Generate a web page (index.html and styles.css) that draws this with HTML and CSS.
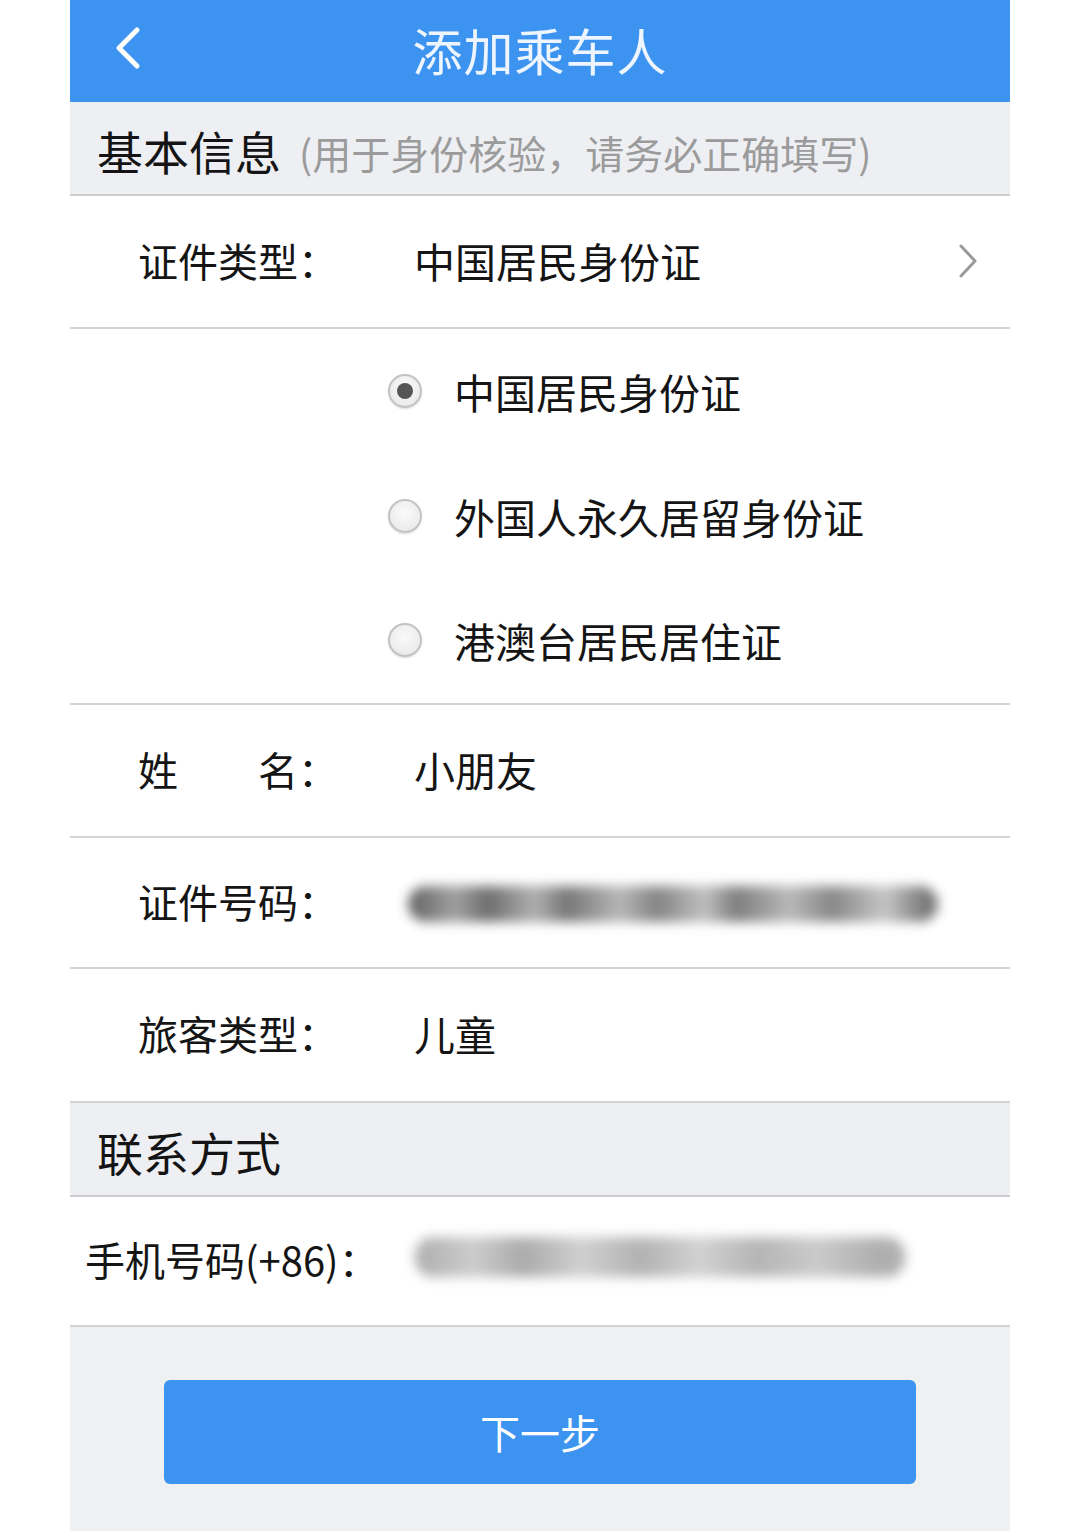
FILE: index.html
```html
<!DOCTYPE html>
<html lang="zh-CN">
<head>
<meta charset="utf-8">
<title>添加乘车人</title>
<link rel="stylesheet" href="styles.css">
</head>
<body>
<div class="page">
  <header class="topbar">
    <svg class="back" width="30" height="44" viewBox="0 0 30 44"><path d="M24 4 L6 22 L24 40" fill="none" stroke="#fff" stroke-width="5" stroke-linecap="round" stroke-linejoin="round"/></svg>
    <h1 class="title">添加乘车人</h1>
  </header>

  <div class="section">
    <span class="section-title">基本信息</span>
    <span class="section-note">(用于身份核验，请务必正确填写)</span>
  </div>

  <div class="row">
    <div class="label">证件类型：</div>
    <div class="value">中国居民身份证</div>
    <svg class="chev" width="24" height="36" viewBox="0 0 24 36"><path d="M5 3 L19 18 L5 33" fill="none" stroke="#9a9a9a" stroke-width="3" stroke-linecap="round" stroke-linejoin="round"/></svg>
  </div>

  <div class="options">
    <div class="option"><span class="radio checked"></span><span>中国居民身份证</span></div>
    <div class="option"><span class="radio"></span><span>外国人永久居留身份证</span></div>
    <div class="option"><span class="radio"></span><span>港澳台居民居住证</span></div>
  </div>

  <div class="row row-name">
    <div class="label split"><span>姓</span><span>名：</span></div>
    <div class="value">小朋友</div>
  </div>

  <div class="row row-id">
    <div class="label">证件号码：</div>
    <div class="smudge smudge-id"></div>
  </div>

  <div class="row row-type">
    <div class="label">旅客类型：</div>
    <div class="value">儿童</div>
  </div>

  <div class="section">
    <span class="section-title">联系方式</span>
  </div>

  <div class="row row-phone">
    <div class="label phone-label">手机号码(+86)：</div>
    <div class="smudge smudge-phone"></div>
  </div>

  <div class="footer">
    <button class="next">下一步</button>
  </div>
</div>
</body>
</html>
```

FILE: styles.css
```css
html, body {
  margin: 0;
  padding: 0;
  background: #ffffff;
}
body {
  font-family: "Noto Sans CJK SC", "Noto Sans", sans-serif;
  color: #151515;
}
.page {
  width: 940px;
  margin: 0 auto;
  min-height: 1531px;
  display: flex;
  flex-direction: column;
  background: #fff;
}
.topbar {
  height: 102px;
  background: #3d94f0;
  display: flex;
  align-items: center;
  position: relative;
}
.back {
  margin-left: 43px;
  margin-top: -6px;
}
.title {
  position: absolute;
  left: 0;
  right: 0;
  top: 0;
  margin: 0;
  text-align: center;
  line-height: 98px;
  font-size: 50px;
  font-weight: 400;
  color: #eef5ff;
  letter-spacing: 1px;
}
.section {
  background: #eeeff3;
  border-bottom: 2px solid #cdcdd0;
  display: flex;
  align-items: center;
  padding-left: 27px;
  padding-top: 4px;
  box-sizing: border-box;
  height: 94px;
}
.section-title {
  font-size: 46px;
  color: #141414;
}
.section-note {
  font-size: 39px;
  color: #9b9b9b;
  margin-left: 18px;
  margin-top: 4px;
}
.row {
  height: 133px;
  box-sizing: border-box;
  border-bottom: 2px solid #d4d4d4;
  display: flex;
  align-items: center;
  padding-left: 68px;
  padding-bottom: 4px;
  font-size: 40px;
}
.label {
  width: 276px;
  flex: none;
}
.split {
  display: flex;
  justify-content: space-between;
  width: 200px;
  margin-right: 76px;
}
.value {
  font-size: 41px;
  flex: 1;
}
.chev {
  margin-right: 30px;
  margin-top: 2px;
}
.options {
  height: 376px;
  box-sizing: border-box;
  border-bottom: 2px solid #d4d4d4;
  display: flex;
  flex-direction: column;
  padding-left: 318px;
}
.option {
  height: 124.6px;
  display: flex;
  align-items: center;
  font-size: 41px;
}
.radio {
  width: 34px;
  height: 34px;
  box-sizing: border-box;
  border-radius: 50%;
  border: 2px solid #c3c3c3;
  background: radial-gradient(circle at 50% 40%, #fafafa 0%, #e6e6e6 100%);
  box-shadow: 0 1px 2px rgba(0,0,0,0.15);
  margin-right: 32px;
  display: flex;
  align-items: center;
  justify-content: center;
}
.radio.checked::after {
  content: "";
  width: 16px;
  height: 16px;
  border-radius: 50%;
  background: #555;
}
.row-name { height: 133px; }
.row-id { height: 131px; }
.row-type { height: 134px; }
.row-phone { height: 130px; padding-left: 15px; }
.phone-label {
  width: 330px;
}
.smudge {
  height: 36px;
  filter: blur(6px);
  border-radius: 18px;
}
.smudge-id {
  width: 530px;
  margin-left: -6px;
  margin-top: 6px;
  background: linear-gradient(90deg, #3a3a3a 0%, #8a8a8a 9%, #4a4a4a 15%, #9c9c9c 24%, #555 30%, #a5a5a5 40%, #666 47%, #b0b0b0 56%, #5e5e5e 62%, #a8a8a8 72%, #6a6a6a 80%, #b8b8b8 90%, #555 98%);
  opacity: 0.8;
}
.smudge-phone {
  width: 490px;
  margin-top: -4px;
  height: 40px;
  background: linear-gradient(90deg, #a0a0a0 0%, #c4c4c4 12%, #9c9c9c 22%, #c8c8c8 34%, #a5a5a5 46%, #cacaca 58%, #a8a8a8 70%, #c2c2c2 82%, #a2a2a2 94%);
  opacity: 0.85;
}
.footer {
  flex: 1;
  background: #eff0f2;
  padding-top: 53px;
  display: flex;
  justify-content: center;
}
.next {
  width: 752px;
  height: 104px;
  border: none;
  border-radius: 6px;
  background: #3d94f0;
  color: #fff;
  font-family: "Noto Sans CJK SC", sans-serif;
  font-size: 40px;
  padding: 0;
  align-self: flex-start;
}
```
